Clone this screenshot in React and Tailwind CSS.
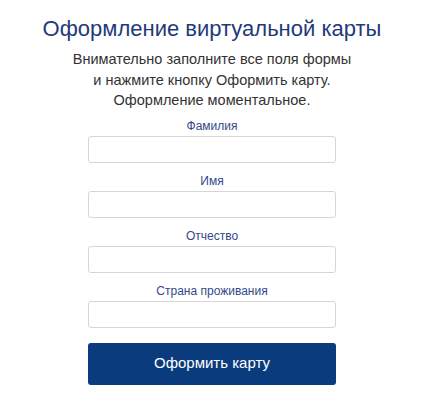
export default function App() {
  const fields = ["Фамилия", "Имя", "Отчество", "Страна проживания"];
  return (
    <div className="w-[424px] h-[405px] bg-white flex flex-col items-center" style={{ fontFamily: '"Liberation Sans", Arial, sans-serif' }}>
      <h1 className="mt-[15px] text-[22px] leading-[28px] text-[#1f3a7a]">Оформление виртуальной карты</h1>
      <p className="mt-[6px] text-center text-[14.5px] leading-[20.5px] text-[#333333]">
        Внимательно заполните все поля формы<br />
        и нажмите кнопку Оформить карту.<br />
        Оформление моментальное.
      </p>
      <div className="mt-[7px] w-[248px] flex flex-col">
        {fields.map((f) => (
          <div key={f} className="flex flex-col items-center">
            <label className="text-[12px] leading-[14px] text-[#34488a] mb-[3px] mt-[1px]">{f}</label>
            <div className="w-full h-[27px] border border-[#d6d6d6] rounded-[3px] bg-white mb-[10px]" />
          </div>
        ))}
        <button className="mt-[5px] w-full h-[42px] rounded-[3px] bg-[#0a3b7c] text-white text-[15px]">Оформить карту</button>
      </div>
    </div>
  );
}
